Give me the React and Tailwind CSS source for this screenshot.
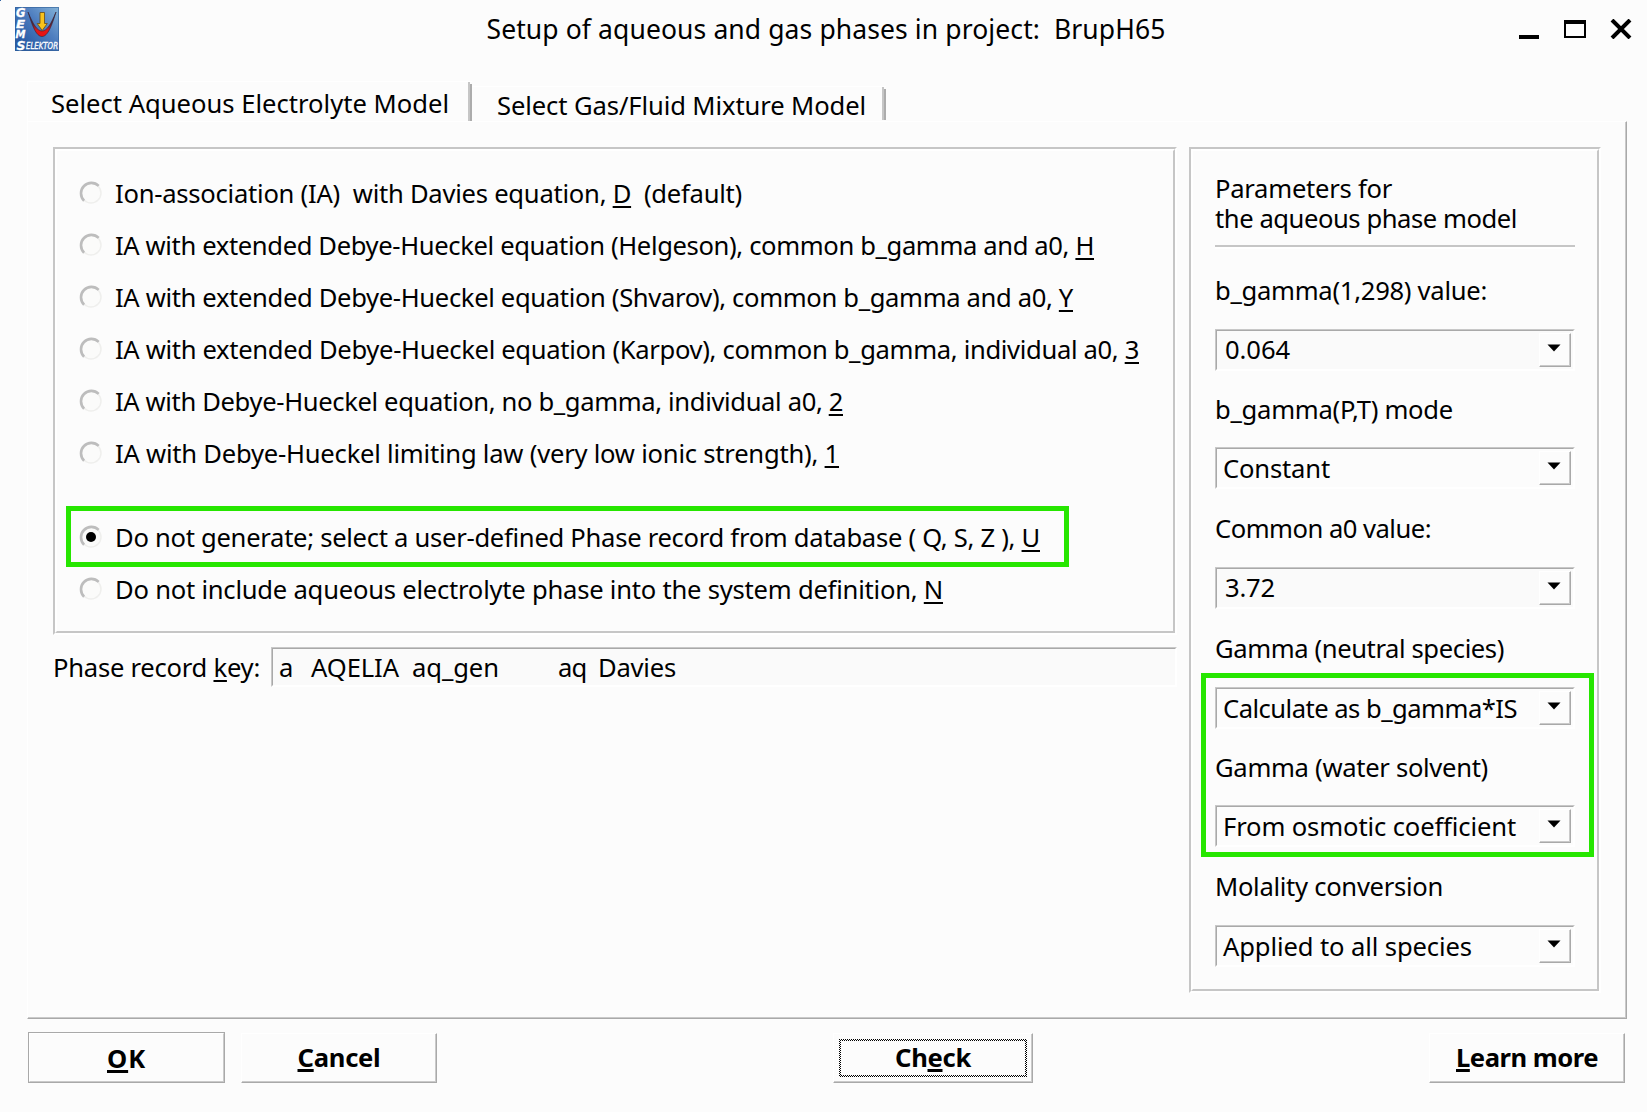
import { useLayoutEffect, useRef } from "react";

/* Single line of text whose tracking is adjusted so that it spans `w` pixels. */
function Line({ w, className = "", children }) {
  const ref = useRef(null);
  useLayoutEffect(() => {
    const el = ref.current;
    el.style.letterSpacing = "0px";
    const natural = el.getBoundingClientRect().width;
    el.style.letterSpacing = `${(w - natural) / el.textContent.length}px`;
  }, [w]);
  return (
    <span ref={ref} className={`inline-block whitespace-pre [font-variant-ligatures:none] ${className}`}>
      {children}
    </span>
  );
}

function Key({ children }) {
  return (
    <span className="underline decoration-2 underline-offset-[3px] [text-decoration-skip-ink:none]">
      {children}
    </span>
  );
}

function BoldKey({ children }) {
  return (
    <span className="underline decoration-[3px] underline-offset-[2px] [text-decoration-skip-ink:none]">
      {children}
    </span>
  );
}

function Logo() {
  return (
    <svg width="44" height="44" viewBox="0 0 44 44" className="block overflow-visible">
      <defs>
        <linearGradient id="sky" x1="1" y1="0" x2="0.2" y2="0.8">
          <stop offset="0" stopColor="#86b4d8" />
          <stop offset="0.5" stopColor="#4f7fc0" />
          <stop offset="1" stopColor="#2b5ca6" />
        </linearGradient>
        <linearGradient id="curve" x1="0" y1="0" x2="0" y2="1">
          <stop offset="0" stopColor="#26304e" />
          <stop offset="0.5" stopColor="#5a2538" />
          <stop offset="0.75" stopColor="#e01818" />
          <stop offset="1" stopColor="#f01010" />
        </linearGradient>
      </defs>
      <rect width="44" height="44" fill="url(#sky)" />
      <rect x="0.5" y="0.5" width="43" height="43" fill="none" stroke="#2d5c96" strokeOpacity="0.6" />
      <path d="M13 5 C18 17 22 24 27 24 C32 24 36 17 41 5 C37 18 33 29.500 27 29.500 C21 29.500 17 18 13 5Z" fill="url(#curve)" stroke="#3a2030" strokeWidth="0.6" />
      <path d="M25 5.500h4.500v11h2.800L27.200 23.500 22.200 16.500H25Z" fill="#f7c21c" stroke="#6b4b12" strokeWidth="0.8" />
      <g fill="#fff" stroke="#fff" strokeWidth="0.3" fontFamily="'DejaVu Sans', sans-serif" fontWeight="bold" fontStyle="italic">
        <text x="1" y="10" fontSize="11.500" textLength="9.500" lengthAdjust="spacingAndGlyphs">G</text>
        <text x="1" y="20.500" fontSize="11" textLength="9" lengthAdjust="spacingAndGlyphs">E</text>
        <text x="0.500" y="31" fontSize="11" textLength="10" lengthAdjust="spacingAndGlyphs">M</text>
        <text x="1.500" y="42.500" fontSize="12.500" textLength="9" lengthAdjust="spacingAndGlyphs">S</text>
        <text x="11" y="41.800" fontSize="9" fontWeight="normal" textLength="32" lengthAdjust="spacingAndGlyphs">ELEKTOR</text>
      </g>
    </svg>
  );
}

function Radio({ checked }) {
  return (
    <svg width="24" height="24" viewBox="0 0 24 24" className="block shrink-0">
      <circle cx="12" cy="12" r="10" fill="#fbfbfa" stroke="#efefed" strokeWidth="1.500" />
      <path d="M5.100 19.700A10 10 0 0 1 19.700 4.900" fill="none" stroke="#bdbdbd" strokeWidth="2.600" />
      {checked && <circle cx="12" cy="12" r="5" fill="#000" />}
    </svg>
  );
}

function Option({ w, checked, children, className = "" }) {
  return (
    <div className={`relative flex h-[52px] items-center ${className}`}>
      <div className="mr-3 ml-px pb-px">
        <Radio checked={checked} />
      </div>
      <Line w={w} className="pt-0.5">{children}</Line>
      {checked && (
        <div className="absolute -top-[5px] -left-[12px] h-[61px] w-[1003px] border-[5px] border-[#26e600]" />
      )}
    </div>
  );
}

function Groove({ className = "", children }) {
  return (
    <div className={`border-2 border-t-[#c6c6c6] border-r-white border-b-white border-l-[#c6c6c6] ${className}`}>
      <div className="relative h-full border-2 border-t-white border-r-[#c6c6c6] border-b-[#c6c6c6] border-l-white">
        {children}
      </div>
    </div>
  );
}

function Sunken({ className = "", inner = "", children }) {
  return (
    <div className={`border border-t-[#c8c8c8] border-r-white border-b-white border-l-[#c8c8c8] ${className}`}>
      <div className={`flex h-full items-center border border-t-[#a9a9a9] border-r-white border-b-white border-l-[#a9a9a9] ${inner}`}>
        {children}
      </div>
    </div>
  );
}

function Field({ label, labelW, value, valueW, editable, className }) {
  return (
    <div className={`flex flex-col ${className}`}>
      <div className="h-[30px] leading-[32px]">
        <Line w={labelW}>{label}</Line>
      </div>
      <Sunken className="h-[42px] w-[360px]" inner={editable ? "justify-between bg-[#fafafa] pl-2 pr-0.5" : "justify-between pl-1.5 pr-0.5"}>
        <Line w={valueW} className={editable ? "" : "pt-0.5"}>{value}</Line>
        <div className="h-[34px] w-8 border border-t-white border-r-[#a9a9a9] border-b-[#a9a9a9] border-l-white bg-[#fcfcfc]">
          <div className="flex h-full items-center justify-center border-r border-b border-[#cacaca]">
            <svg width="14" height="8" viewBox="0 0 14 8" className="mr-px mb-1 block">
              <path d="M0.500 0.500H13.500L7 7.500Z" fill="#000" />
            </svg>
          </div>
        </div>
      </Sunken>
    </div>
  );
}

function PushButton({ w, className = "", children }) {
  return (
    <button className={`h-[50px] border border-t-white border-r-[#a9a9a9] border-b-[#a9a9a9] border-l-white ${className}`}>
      <span className="flex h-full items-center justify-center border-r border-b border-[#cacaca] pt-px pl-px font-bold">
        <Line w={w}>{children}</Line>
      </span>
    </button>
  );
}

export default function App() {
  return (
    <div className="relative flex h-[1112px] w-[1647px] flex-col overflow-hidden bg-[#fcfcfc] font-['Noto_Sans',sans-serif] text-[25.6px] leading-[30px] text-black">
      <div className="absolute top-0 left-0 h-px w-px bg-[#3465a4]" />

      <header className="flex h-[58px] shrink-0 items-start justify-between pt-[7px] pr-[15px] pl-[15px]">
        <Logo />
        <div className="ml-[74px] pt-[7px] text-[26.5px]">
          <Line w={679}>Setup of aqueous and gas phases in project:  BrupH65</Line>
        </div>
        <div className="flex pt-3">
          <svg width="20" height="20" viewBox="0 0 20 20" className="mr-[25px]">
            <path d="M0 16H20V20H0Z" fill="#000" />
          </svg>
          <svg width="22" height="20" viewBox="0 0 22 20" className="mr-[24px]">
            <path d="M0 1H22V19H0ZM2 5V17H20V5Z" fill="#000" fillRule="evenodd" />
          </svg>
          <svg width="22" height="20" viewBox="0 0 22 20">
            <path d="M2 1L20 19M20 1L2 19" stroke="#000" strokeWidth="4" />
          </svg>
        </div>
      </header>

      <nav className="flex h-[63px] shrink-0 items-end pl-[27px]">
        <div className="flex h-10 w-[445px] justify-between border-t border-l border-white pl-[23px]">
          <Line w={398} className="pt-[7px]">Select Aqueous Electrolyte Model</Line>
          <div className="flex">
            <div className="w-0.5 bg-[#c6c6c6]" />
            <div className="mt-0.5 w-0.5 bg-[#acacac]" />
          </div>
        </div>
        <div className="mb-px flex h-[34px] w-[414px] justify-between border-t border-white pl-[25px]">
          <Line w={369} className="pt-[4px]">Select Gas/Fluid Mixture Model</Line>
          <div className="flex">
            <div className="w-0.5 bg-[#c6c6c6]" />
            <div className="mt-0.5 w-0.5 bg-[#acacac]" />
          </div>
        </div>
      </nav>

      <main className="ml-[27px] h-[898px] w-[1600px] shrink-0 border border-t-white border-r-[#a9a9a9] border-b-[#a9a9a9] border-l-white">
        <div className="flex h-full items-start border-r border-b border-[#cacaca] pt-[25px] pl-[25px]">
          <section className="w-[1124px]">
            <Groove className="h-[488px]">
              <div className="pt-4 pl-[21px]">
                <Option w={627}>Ion-association (IA)  with Davies equation, <Key>D</Key>  (default)</Option>
                <Option w={979}>IA with extended Debye-Hueckel equation (Helgeson), common b_gamma and a0, <Key>H</Key></Option>
                <Option w={958}>IA with extended Debye-Hueckel equation (Shvarov), common b_gamma and a0, <Key>Y</Key></Option>
                <Option w={1024}>IA with extended Debye-Hueckel equation (Karpov), common b_gamma, individual a0, <Key>3</Key></Option>
                <Option w={728}>IA with Debye-Hueckel equation, no b_gamma, individual a0, <Key>2</Key></Option>
                <Option w={724}>IA with Debye-Hueckel limiting law (very low ionic strength), <Key>1</Key></Option>
                <Option w={925} checked className="mt-8">Do not generate; select a user-defined Phase record from database ( Q, S, Z ), <Key>U</Key></Option>
                <Option w={828}>Do not include aqueous electrolyte phase into the system definition, <Key>N</Key></Option>
              </div>
            </Groove>
            <div className="mt-3 flex items-center">
              <div className="w-[218px]">
                <Line w={207} className="pt-0.5">Phase record <Key>k</Key>ey:</Line>
              </div>
              <Sunken className="h-10 w-[906px]" inner="bg-[#fafafa] pt-0.5 pl-1.5">
                <Line w={32}>a   </Line>
                <Line w={101}>AQELIA  </Line>
                <Line w={146}>aq_gen         </Line>
                <Line w={40}>aq  </Line>
                <Line w={78}>Davies</Line>
              </Sunken>
            </div>
          </section>

          <Groove className="ml-3 h-[846px] w-[412px]">
            <div className="pt-[23px] pl-[22px]">
              <div className="flex flex-col items-start">
                <Line w={177}>Parameters for</Line>
                <Line w={302}>the aqueous phase model</Line>
              </div>
              <div className="mt-[11px] h-1 w-[360px] border-t-2 border-b-2 border-t-[#c6c6c6] border-b-white" />
              <Field className="mt-[26px] gap-6" label="b_gamma(1,298) value:" labelW={272} value="0.064" valueW={65} editable />
              <Field className="mt-[23px] gap-[23px]" label="b_gamma(P,T) mode" labelW={238} value="Constant" valueW={107} />
              <Field className="mt-6 gap-6" label="Common a0 value:" labelW={216} value="3.72" valueW={50} editable />
              <Field className="mt-6 gap-6" label="Gamma (neutral species)" labelW={289} value="Calculate as b_gamma*IS" valueW={294} />
              <Field className="mt-[23px] gap-[23px]" label="Gamma (water solvent)" labelW={273} value="From osmotic coefficient" valueW={293} />
              <Field className="mt-6 gap-6" label="Molality conversion" labelW={228} value="Applied to all species" valueW={249} />
            </div>
            <div className="absolute top-[522px] left-2 h-[184px] w-[393px] border-[5px] border-[#26e600]" />
          </Groove>
        </div>
      </main>

      <footer className="flex pt-[13px] pl-7">
        <button className="h-[51px] w-[197px] border border-[#a9a9a9]">
          <span className="flex h-full items-center justify-center border-t border-r border-b border-l border-t-white border-r-[#cacaca] border-b-[#cacaca] border-l-white pt-0.5 font-bold">
            <Line w={39}><BoldKey>O</BoldKey>K</Line>
          </span>
        </button>
        <PushButton w={83} className="mt-px ml-4 w-[196px]"><BoldKey>C</BoldKey>ancel</PushButton>
        <div className="relative mt-px ml-[396px]">
          <PushButton w={76} className="w-[200px]">Ch<BoldKey>e</BoldKey>ck</PushButton>
          <svg width="188" height="38" className="absolute top-1.5 left-1.5">
            <defs>
              <pattern id="dots" width="2" height="2" patternUnits="userSpaceOnUse">
                <path d="M0 0h1v1H0zM1 1h1v1H1z" fill="#000" shapeRendering="crispEdges" />
              </pattern>
            </defs>
            <path d="M0 0H188V38H0ZM2 2V36H186V2Z" fill="url(#dots)" fillRule="evenodd" shapeRendering="crispEdges" />
          </svg>
        </div>
        <PushButton w={142} className="mt-px ml-[396px] w-[196px]"><BoldKey>L</BoldKey>earn more</PushButton>
      </footer>
    </div>
  );
}
